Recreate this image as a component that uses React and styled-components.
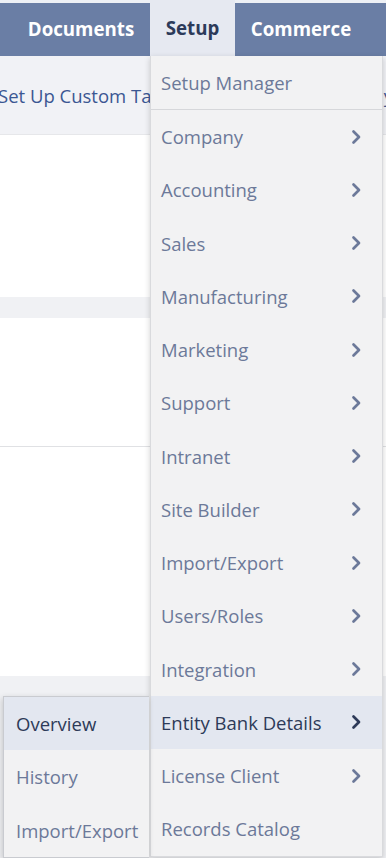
import React from 'react';
import styled, {createGlobalStyle} from "styled-components";

const Global = createGlobalStyle`
  html, body {
    margin: 0;
    padding: 0;
    background: #f0f1f4;
    font-family: "Open Sans", "Liberation Sans", sans-serif;
    overflow: hidden;
  }
`

const Page = styled.div`
  position: relative;
  width: 386px;
  height: 858px;
  overflow: hidden;
  background: #f0f1f4;
`

const NavBar = styled.div`
  display: flex;
  height: 53px;
  border-top: 3px solid #edf0f5;
  background: #6a7ea5;
  padding-left: 12px;
`

const Tab = styled.div`
  display: flex;
  align-items: center;
  justify-content: center;
  width: ${p => p.w}px;
  padding-bottom: 2px;
  box-sizing: border-box;
  font-size: 18.7px;
  font-weight: 700;
  color: ${p => p.active ? '#2c3a5a' : '#ffffff'};
  background: ${p => p.active ? '#e6e9f1' : 'transparent'};
  margin-top: ${p => p.active ? '-3px' : '0'};
`

const SubHeader = styled.div`
  display: flex;
  justify-content: space-between;
  align-items: center;
  height: 78px;
  margin: 0 -7px 0 -2px;
  background: #f1f2f6;
  border-bottom: 1px solid #e6e7ea;
`

const HeadLink = styled.span`
  font-size: 18.5px;
  color: #3b5793;
  white-space: nowrap;
`

const Panel = styled.div`
  background: #ffffff;
  height: ${p => p.h}px;
  border-bottom: ${p => p.line ? '1px solid #e0e1e4' : 'none'};
`

const Gap = styled.div`
  height: ${p => p.h}px;
`

const Menu = styled.div`
  position: absolute;
  top: 56px;
  left: 150px;
  width: 231px;
  background: #f2f2f3;
  border: 1px solid #d9dadd;
  border-top: none;
  box-shadow: 0 2px 6px rgba(0, 0, 0, 0.18);
`

const SubMenu = styled.div`
  position: absolute;
  top: 696px;
  left: 3px;
  width: 145px;
  background: #f2f2f3;
  border: 1px solid #c9cbd0;
  border-right: none;
  box-shadow: -1px 2px 6px rgba(0, 0, 0, 0.18);
`

const Item = styled.div`
  display: flex;
  align-items: center;
  justify-content: space-between;
  height: ${p => p.h || 53.25}px;
  padding: 0 21px 0 ${p => p.pl || 10}px;
  font-size: 18.5px;
  white-space: nowrap;
  color: ${p => p.active ? '#2d3a58' : '#6c7999'};
  background: ${p => p.active ? '#e3e7f0' : 'transparent'};
  border-bottom: ${p => p.divider ? '1px solid #d6d7da' : 'none'};
  box-sizing: border-box;
`

const Chevron = ({active}) => (
    <svg width="10" height="16" viewBox="0 0 10 16">
        <polyline points="2.5,2.5 8,8 2.5,13.5" fill="none"
                  stroke={active ? '#2d3a58' : '#6c7999'} strokeWidth="2.7"
                  strokeLinecap="round" strokeLinejoin="round"/>
    </svg>
)

const items = [
    ['Company', true],
    ['Accounting', true],
    ['Sales', true],
    ['Manufacturing', true],
    ['Marketing', true],
    ['Support', true],
    ['Intranet', true],
    ['Site Builder', true],
    ['Import/Export', true],
    ['Users/Roles', true],
    ['Integration', true],
    ['Entity Bank Details', true, true],
    ['License Client', true],
    ['Records Catalog', false],
]

const App = () => {
    return (
        <Page>
            <Global/>
            <NavBar>
                <Tab w={138}>Documents</Tab>
                <Tab w={85} active>Setup</Tab>
                <Tab w={132}>Commerce</Tab>
            </NavBar>
            <SubHeader>
                <HeadLink>Set Up Custom Tab</HeadLink>
                <HeadLink>Company</HeadLink>
            </SubHeader>
            <Panel h={162}/>
            <Gap h={21}/>
            <Panel h={128} line/>
            <Panel h={229}/>

            <Menu>
                <Item h={54} divider>Setup Manager</Item>
                {items.map(([label, sub, active]) => (
                    <Item key={label} active={active}>
                        {label}
                        {sub && <Chevron active={active}/>}
                    </Item>
                ))}
            </Menu>

            <SubMenu>
                <Item pl={12} active>Overview</Item>
                <Item pl={12}>History</Item>
                <Item pl={12}>Import/Export</Item>
            </SubMenu>
        </Page>
    )
}

export default App
